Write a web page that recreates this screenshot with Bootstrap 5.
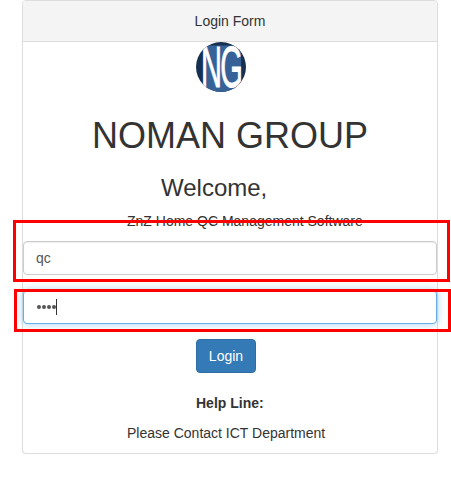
<!DOCTYPE html>
<html lang="en">
<head>
<meta charset="utf-8">
<meta name="viewport" content="width=device-width, initial-scale=1">
<title>Login Form</title>
<link href="https://cdn.jsdelivr.net/npm/bootstrap@5.3.0/dist/css/bootstrap.min.css" rel="stylesheet">
<style>
body{font:14px/20px "Liberation Sans",Arial,sans-serif;color:#333;overflow:hidden}
.login-panel{width:416px;height:454px;margin-left:22px;border:1px solid #ddd;border-radius:4px;box-shadow:0 1px 1px rgba(0,0,0,.05)}
.login-panel .card-header{height:41px;padding:10px 15px;background:#f4f4f4;border-bottom:1px solid #ddd;color:#333}
.logo{width:50px;height:50px;margin-left:173px}
.brand{font-size:36px;line-height:40px;font-weight:400;margin:24px 0 0}
.welcome{font-size:24px;line-height:26px;font-weight:400;margin:19px 0 0 138px}
.indent{margin-left:104px}
.tagline{margin-top:10px;margin-bottom:10px}
.login-field{height:34px;padding:6px 12px;font-size:14px;line-height:20px;color:#555;border:1px solid #ccc;border-radius:4px;box-shadow:inset 0 1px 1px rgba(0,0,0,.075)}
.login-field.active-field{margin-top:15px;padding-left:13px;border-color:#66afe9;box-shadow:inset 0 1px 1px rgba(0,0,0,.075),0 0 8px rgba(102,175,233,.6)}
.dots i{width:4px;height:4px;border-radius:50%;background:#555;margin-right:1px}
.caret{width:1px;height:16px;background:#333;margin-left:-1px}
.btn-login{width:60px;height:34px;margin-top:15px;padding:6px 0;font-size:14px;line-height:20px;color:#fff;background:#337ab7;border:1px solid #2e6da4;border-radius:4px}
.btn-login:hover{color:#fff;background:#286090}
.mid{margin-left:173px}
.help-title{margin-top:20px;margin-bottom:10px}
.highlight{position:absolute;border:3px solid #f00;pointer-events:none;width:437px}
.highlight-user{left:13px;top:220px;height:62px}
.highlight-pass{left:14px;top:289px;height:43px}
</style>
</head>
<body class="bg-white">
<main class="card login-panel">
  <div class="card-header text-center">Login Form</div>
  <div class="card-body p-0">
    <svg class="logo d-block" viewBox="0 0 50 50" role="img" aria-label="NG">
      <defs><clipPath id="round"><circle cx="25" cy="25" r="25"/></clipPath></defs>
      <g clip-path="url(#round)">
        <rect width="50" height="50" fill="#18304f"/>
        <rect x="7" y="3.5" width="38" height="47" fill="#366297"/>
        <g font-family="Liberation Sans, Arial, sans-serif" font-size="58" fill="#fff" stroke="#fff" stroke-width=".9">
          <text transform="translate(5 45) scale(.5 1)">N</text>
          <text transform="translate(24.3 45) scale(.5 1)">G</text>
        </g>
      </g>
    </svg>
    <h1 class="brand text-center">NOMAN GROUP</h1>
    <h3 class="welcome">Welcome,</h3>
    <p class="tagline indent">ZnZ Home QC Management Software</p>
    <form onsubmit="return false">
      <input class="form-control login-field d-block" type="text" value="qc" aria-label="User name">
      <div class="form-control login-field active-field d-flex align-items-center" role="textbox" aria-label="Password">
        <span class="dots d-flex"><i></i><i></i><i></i><i></i></span><span class="caret"></span>
      </div>
      <button class="btn btn-login mid d-block" type="submit">Login</button>
    </form>
    <p class="mid fw-bold help-title">Help Line:</p>
    <p class="indent mb-0">Please Contact ICT Department</p>
  </div>
</main>
<div class="highlight highlight-user"></div>
<div class="highlight highlight-pass"></div>
<script src="https://cdn.jsdelivr.net/npm/bootstrap@5.3.0/dist/js/bootstrap.bundle.min.js"></script>
</body>
</html>
